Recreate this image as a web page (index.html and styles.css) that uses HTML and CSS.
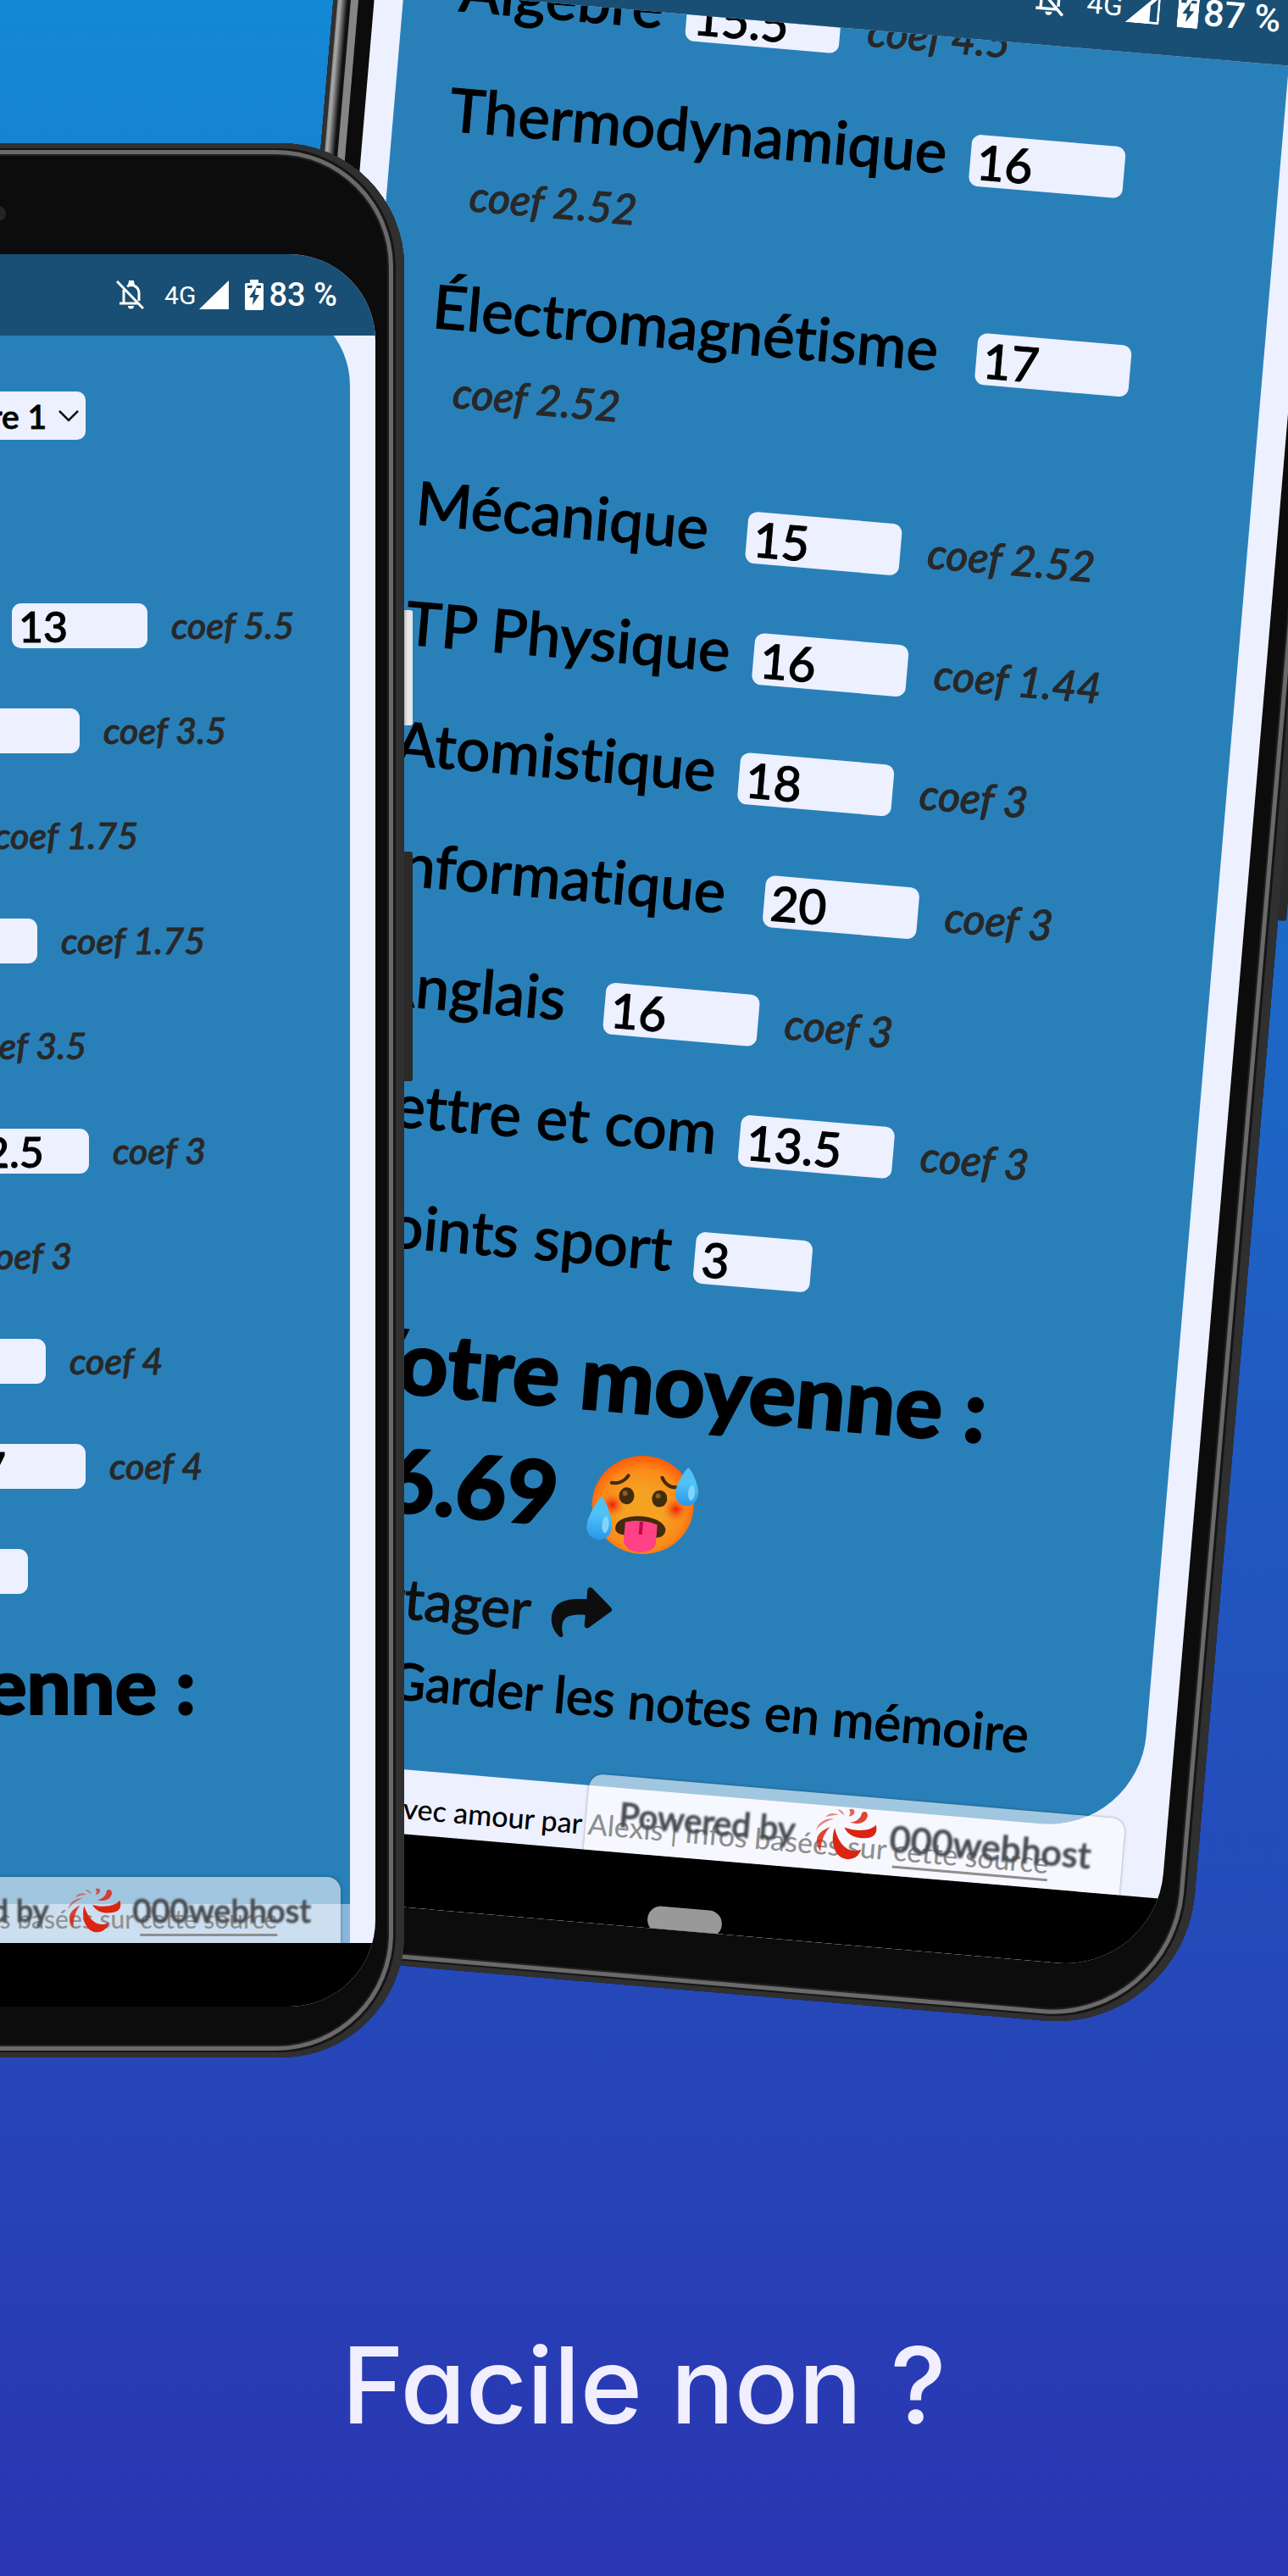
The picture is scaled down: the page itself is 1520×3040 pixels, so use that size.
FILE: index.html
```html
<!DOCTYPE html>
<html lang="fr">
<head>
<meta charset="utf-8">
<meta name="viewport" content="width=device-width, initial-scale=1">
<title>Facile non ?</title>
<link rel="stylesheet" href="styles.css">
</head>
<body>
<svg class="defs" aria-hidden="true">
  <symbol id="bell-off" viewBox="0 0 33 34">
    <path fill="none" stroke="currentColor" stroke-width="3" d="M9 11v15M13 7c7-4 14 1 14 8v9M4 27h22M1 1l31 32"/>
    <path fill="currentColor" d="M15 1a3 3 0 0 1 6 0l1 4h-8zM14 30h7a3.500 3.500 0 0 1-7 0z"/>
  </symbol>
  <symbol id="signal" viewBox="0 0 35 34"><path fill="currentColor" d="M35 0v34H0z"/></symbol>
  <symbol id="signal-low" viewBox="0 0 35 34"><path fill="currentColor" fill-rule="evenodd" d="M35 0v34H0zM32.500 7.500L25 15v16.500h7.500z"/></symbol>
  <symbol id="battery" viewBox="0 0 22 36">
    <path fill="currentColor" fill-rule="evenodd" d="M6 0h10v4h4q2 0 2 2v28q0 2-2 2H2q-2 0-2-2V6q0-2 2-2h4zM3 7v3h5l1-3zM14 7l-1 3h6V7zM13 9L5 21h5l-1 9 8-12h-5z"/>
  </symbol>
  <symbol id="swirl" viewBox="0 0 190 160">
    <g fill="#dc2410">
      <path d="M58 64C46 110 66 160 108 158c20-2 34-16 38-34-30 16-68 2-88-60z"/>
      <path d="M88 60c17 34 62 32 84 24 15-6 20-22 13-40-13 20-55 28-97 16z"/>
      <path opacity=".85" d="M20 142C-6 108 4 82 44 62 26 84 20 110 20 142z"/>
      <path opacity=".85" d="M104 43c22-4 32-16 34-31 8-12 20-4 19 8-4 20-28 30-53 23z"/>
      <path opacity=".7" d="M98 4c8-6 19-2 17 8-2 8-9 12-17 13 6-8 6-14 0-21z"/>
      <path opacity=".55" d="M1 76c5-26 26-40 52-40C32 46 16 54 1 76zM27 33c8-14 25-17 40-9-16 0-26 4-40 9zM62 6c11 0 19 6 22 17-9-7-15-10-22-17z"/>
    </g>
  </symbol>
</svg>

<main class="poster">
  <section class="stage">

    <article class="phone phone-tilted">
      <span class="side-key key-power"></span><span class="side-key key-volume"></span>
      <div class="screen">
        <header class="status">
          <svg class="i-bell"><use href="#bell-off"/></svg>
          <span class="net">4G</span>
          <svg class="i-signal"><use href="#signal-low"/></svg>
          <svg class="i-battery"><use href="#battery"/></svg>
          <span class="level">87 %</span>
        </header>
        <div class="view view-end">
          <form class="card">
            <div class="grades">
              <div class="grade"><label for="r1">Algèbre</label><input id="r1" value="15.5"><em>coef 4.5</em></div>
              <div class="grade"><label for="r2">Thermodynamique</label><input id="r2" value="16"><em>coef 2.52</em></div>
              <div class="grade"><label for="r3">Électromagnétisme&nbsp;</label><input id="r3" value="17"><em>coef 2.52</em></div>
              <div class="grade"><label for="r4">Mécanique&nbsp;</label><input id="r4" value="15"><em>coef 2.52</em></div>
              <div class="grade"><label for="r5">TP Physique</label><input id="r5" value="16"><em>coef 1.44</em></div>
              <div class="grade"><label for="r6">Atomistique</label><input id="r6" value="18"><em>coef 3</em></div>
              <div class="grade"><label for="r7">Informatique&nbsp;</label><input id="r7" value="20"><em>coef 3</em></div>
              <div class="grade"><label for="r8">Anglais&nbsp;</label><input id="r8" value="16"><em>coef 3</em></div>
              <div class="grade"><label for="r9">Lettre et com</label><input id="r9" value="13.5"><em>coef 3</em></div>
              <div class="grade"><label for="r10">Points sport</label><input id="r10" class="short" value="3"></div>
            </div>
            <h2>Votre moyenne : 16.69
              <svg class="emoji" viewBox="0 0 130 118" role="img" aria-label="visage en surchauffe">
                <defs>
                  <radialGradient id="face" cx=".5" cy=".55" r=".55"><stop offset=".4" stop-color="#f5a122"/><stop offset=".75" stop-color="#fb8a1a"/><stop offset="1" stop-color="#ff5a06"/></radialGradient>
                  <radialGradient id="blush"><stop offset="0" stop-color="#ef1b08"/><stop offset="1" stop-color="#f5831a" stop-opacity="0"/></radialGradient>
                  <linearGradient id="drop" x2="0" y2="1"><stop offset=".4" stop-color="#4fc3f7"/><stop offset="1" stop-color="#2a96ea"/></linearGradient>
                </defs>
                <ellipse cx="64" cy="59" rx="60" ry="58" fill="url(#face)"/>
                <circle cx="28" cy="62" r="16" fill="url(#blush)"/><circle cx="103" cy="61" r="16" fill="url(#blush)"/>
                <g fill="none" stroke="#422b0d" stroke-width="4" stroke-linecap="round"><path d="M25 36c8 1 15-3 19-10M84 25c4 7 10 11 18 10"/></g>
                <ellipse cx="44" cy="50" rx="9" ry="10" fill="#422b0d"/><ellipse cx="83" cy="50" rx="9" ry="10" fill="#422b0d"/>
                <circle cx="42" cy="47" r="3" fill="#896024"/><circle cx="81" cy="47" r="3" fill="#896024"/>
                <path fill="#422b0d" d="M34 87c2-18 54-20 59-2 1 10-8 12-14 11H44c-6 0-11-3-10-9z"/>
                <path fill="#ff4185" d="M45 81c12-4 26-4 38 0v22c-2 16-36 16-38 0z"/><path stroke="#c1074a" stroke-width="4" d="M64 79v15"/>
                <path fill="url(#drop)" d="M15 54c3 0 14 22 15 33 0 24-31 22-30 0 1-11 12-33 15-33z"/>
                <path fill="url(#drop)" d="M114 11c3 0 14 19 14 29 0 22-28 20-27 0 1-10 10-29 13-29z"/>
                <ellipse cx="22" cy="86" rx="4" ry="10" fill="#81d4fa"/><ellipse cx="120" cy="40" rx="4" ry="9" fill="#81d4fa"/>
              </svg>
            </h2>
            <button type="button" class="share">Partager
              <svg class="i-share" viewBox="0 30 512 452" aria-hidden="true"><path fill="currentColor" d="M503.691 189.836L327.687 37.851C312.281 24.546 288 35.347 288 56.015v80.053C127.371 137.907 0 170.100 0 322.326c0 61.441 39.581 122.309 83.333 154.132 13.653 9.931 33.111-2.533 28.077-18.631C66.066 312.814 132.917 274.316 288 272.085V360c0 20.700 24.300 31.453 39.687 18.164l176.004-152c11.071-9.562 11.086-26.753 0-36.328z"/></svg>
            </button>
            <div class="keep"><input type="checkbox" id="keep" checked><label for="keep">Garder les notes en mémoire</label></div>
          </form>
          <footer class="credits">Fait avec amour par <span>Alexis | Infos basées sur</span> <a href="#source">cette source</a></footer>
          <aside class="badge"><span class="badge-by">Powered by</span><svg class="i-swirl"><use href="#swirl"/></svg><span class="badge-host">000webhost</span></aside>
        </div>
        <div class="nav"><span class="pill"></span></div>
      </div>
    </article>

    <article class="phone phone-front">
      <span class="side-key key-power"></span><span class="side-key key-volume"></span>
      <span class="sensor"></span>
      <div class="screen">
        <header class="status">
          <svg class="i-bell"><use href="#bell-off"/></svg>
          <span class="net">4G</span>
          <svg class="i-signal"><use href="#signal"/></svg>
          <svg class="i-battery"><use href="#battery"/></svg>
          <span class="level">83 %</span>
        </header>
        <div class="view">
          <form class="card">
            <div class="period">
              <select aria-label="Semestre"><option>Semestre 1</option></select>
              <svg class="i-chevron" viewBox="0 0 24 14" aria-hidden="true"><path fill="none" stroke="#111" stroke-width="2.500" d="M1 1l11 11L23 1"/></svg>
            </div>
            <div class="grades">
              <div class="grade"><label for="f1" style="width:457px">Analyse</label><input id="f1" value="13"><em>coef 5.5</em></div>
              <div class="grade"><label for="f2" style="width:377px">Algèbre</label><input id="f2" value="12"><em>coef 3.5</em></div>
              <div class="grade"><label for="f3" style="width:248px">Optique</label><input id="f3" value="14"><em>coef 1.75</em></div>
              <div class="grade"><label for="f4" style="width:327px">Mécanique</label><input id="f4" value="15"><em>coef 1.75</em></div>
              <div class="grade"><label for="f5" style="width:212px">Chimie</label><input id="f5" value="12"><em>coef 3.5</em></div>
              <div class="grade"><label for="f6" style="width:388px">Informatique</label><input id="f6" value="12.5"><em>coef 3</em></div>
              <div class="grade"><label for="f7" style="width:230px">Anglais</label><input id="f7" value="16"><em>coef 3</em></div>
              <div class="grade"><label for="f8" style="width:337px">Projet</label><input id="f8" value="15"><em>coef 4</em></div>
              <div class="grade"><label for="f9" style="width:384px">Lettre et com</label><input id="f9" value="17"><em>coef 4</em></div>
              <div class="grade"><label for="f10" style="width:356px">Points sport</label><input id="f10" class="short" value="2"></div>
            </div>
            <h2>Votre moyenne :</h2>
          </form>
          <footer class="credits">Fait avec amour par <span>Alexis | Infos basées sur</span> <a href="#source">cette source</a></footer>
          <aside class="badge"><span class="badge-by">Powered by</span><svg class="i-swirl"><use href="#swirl"/></svg><span class="badge-host">000webhost</span></aside>
        </div>
        <div class="nav"><span class="pill"></span></div>
      </div>
    </article>
  </section>

  <h1>Facile non ?</h1>
</main>
</body>
</html>
```
FILE: styles.css
```css
* { box-sizing: border-box; }

body {
  margin: 0;
  min-height: 100vh;
  background: linear-gradient(#1488d4, #2a35b1);
  font-family: Lato, "Noto Sans", sans-serif;
  font-weight: 500;
  font-variant-ligatures: none;
  color: #000;
}

.defs { position: absolute; width: 0; height: 0; }

.poster { overflow: hidden; }

.stage { position: relative; padding-top: 169px; }

h1 {
  margin: 0;
  padding: 315px 0 152px;
  text-align: center;
  color: #f0eeff;
  font: 500 125px/144px Inter, sans-serif;
  font-feature-settings: "cv11";
}

/* ---------- phone body ---------- */
.phone {
  --edge-l: 42px; --edge-r: 34px; --edge-t: 131px; --edge-b: 60px;
  --bar: 96px; --nav: 75px; --gutter: 30px; --pad: 60px;
  --radius: 146px; --screen-radius: 102px;
  --row: 53px; --row-gap: 71px; --wrap-gap: 26px;
  --field: 160px; --field-short: 120px; --field-gap: 24px; --coef-gap: 28px;
  --label: 61px; --label-lh: 38px;
  --digits: 50px; --coef: 43px; --coef-lh: 52px;
  --title: 92px; --title-lh: 122px;
  --small: 30px; --badge-by: 36px; --badge-host: 38px; --credits: 46px;
  position: relative;
  z-index: 2;
  width: 1052px;
  aspect-ratio: 1052 / 2259;
  margin-left: -575px;
  padding: var(--edge-t) var(--edge-r) var(--edge-b) var(--edge-l);
  border-radius: var(--radius);
  background: #0c0c0c;
  box-shadow: inset 0 0 0 6px #303030, inset -5px 0 0 5px #303030,
    inset -5px 0 0 8px #151517, inset -5px 0 0 13px #6a6a6a, inset -5px 0 0 15px #202020;
}

.phone-tilted {
  --edge-l: 48px; --edge-r: 39px; --edge-t: 150px; --edge-b: 69px;
  --bar: 109px; --nav: 86px; --gutter: 34px; --pad: 66px;
  --radius: 164px; --screen-radius: 116px;
  --row: 61px; --row-gap: 81px; --wrap-gap: 31px;
  --field: 182px; --field-short: 138px; --field-gap: 28px; --coef-gap: 32px;
  --label: 71px; --label-lh: 44px;
  --digits: 57px; --coef: 50px; --coef-lh: 60px;
  --title: 104px; --title-lh: 140px;
  --small: 34px; --badge-by: 40px; --badge-host: 43px; --credits: 76px;
  position: absolute;
  z-index: 1;
  left: 392px;
  top: -311px;
  width: 1203px;
  aspect-ratio: 1203 / 2582;
  margin: 0;
  transform-origin: -392px 311px;
  transform: rotate(4.88deg);
}

.phone-tilted::before {
  content: "";
  position: absolute;
  left: 5px;
  top: 164px;
  bottom: 164px;
  width: 25px;
  background: linear-gradient(90deg, #888 0, #aaa 3px, #111 12px, #111 15px, #858585 16px, #858585 24px, #0c0c0c 25px);
}

.side-key { position: absolute; left: 100%; width: 10px; border-radius: 0 3px 3px 0; background: #2a2a2a; }
.key-power { top: 24.4%; height: 6%; background: linear-gradient(90deg, #bbb, #e8e8e8 4px); }
.key-volume { top: 37%; height: 12%; }

.sensor { position: absolute; left: 564px; top: 74px; width: 18px; height: 18px; border-radius: 50%; background: #242424; }

.screen {
  display: flex;
  flex-direction: column;
  height: 100%;
  overflow: hidden;
  border-radius: var(--screen-radius);
  background: #edf0ff;
}

/* ---------- status bar ---------- */
.status {
  position: relative;
  z-index: 1;
  flex: none;
  display: flex;
  align-items: center;
  justify-content: flex-end;
  height: var(--bar);
  padding-right: 45px;
  background: #194f74;
  color: #fff;
  font-family: Roboto, sans-serif;
}
.i-bell { width: 33px; height: 34px; margin-right: 24px; }
.net { margin-right: 4px; font-size: 30px; font-weight: 400; }
.i-signal { width: 35px; height: 34px; margin-right: 19px; }
.i-battery { width: 22px; height: 36px; margin-right: 6px; }
.level { font-size: 38px; font-weight: 500; }

.phone-tilted .status { padding-right: 48px; }
.phone-tilted .i-bell { width: 38px; height: 39px; margin-right: 26px; }
.phone-tilted .net { font-size: 34px; }
.phone-tilted .i-signal { width: 40px; height: 39px; margin-right: 21px; }
.phone-tilted .i-battery { width: 25px; height: 41px; }
.phone-tilted .level { font-size: 43px; }

/* ---------- grade form ---------- */
.view {
  position: relative;
  flex: 1;
  min-height: 0;
  display: flex;
  flex-direction: column;
  overflow: hidden;
}
.view-end { justify-content: flex-end; }

.card {
  flex: 1 0 auto;
  margin: -41px var(--gutter) 0;
  padding: 107px var(--pad) 0;
  border-radius: 100px 100px 0 0;
  background: #2980b9;
  -webkit-text-stroke: 1px currentColor;
}
.view-end .card {
  flex: none;
  margin-top: 0;
  padding: 80px var(--pad) 67px;
  border-radius: 115px;
  border-bottom-left-radius: 0;
}

.period { position: relative; display: flex; width: 544px; margin-bottom: 193px; }
.period select {
  appearance: none;
  width: 100%;
  height: 57px;
  padding: 0 46px 0 20px;
  border: 0;
  border-radius: 10px;
  background: #edf0ff;
  color: #000;
  font: 500 39px Lato, sans-serif;
  text-align: right;
  text-align-last: right;
}
.i-chevron { position: absolute; right: 8px; top: 22px; width: 24px; height: 14px; }

.grades { display: flex; flex-direction: column; gap: var(--row-gap); }

.grade { display: flex; flex-wrap: wrap; align-items: flex-start; row-gap: var(--wrap-gap); }
.grade label { flex: none; font-size: var(--label); line-height: var(--label-lh); white-space: nowrap; }
.phone-tilted .grade label { margin-right: var(--field-gap); }
.grade input {
  flex: none;
  width: var(--field);
  height: var(--row);
  padding: 0 8px;
  border: 0;
  border-radius: 11px;
  background: #edf0ff;
  color: #000;
  font: 500 var(--digits) Lato, sans-serif;
}
.grade .short { width: var(--field-short); }
.grade em { margin-left: var(--coef-gap); color: #282828; font-size: var(--coef); line-height: var(--coef-lh); }

h2 {
  margin: 46px 0 0;
  font-size: var(--title);
  line-height: var(--title-lh);
  font-weight: 900;
  -webkit-text-stroke: 2px currentColor;
}
.phone-tilted h2 { margin-top: 49px; }

.emoji { width: 130px; height: 118px; margin: -12px 0 -12px 12px; vertical-align: -14px; }

.share {
  display: flex;
  align-items: center;
  gap: 24px;
  margin-top: 30px;
  padding: 0;
  border: 0;
  background: none;
  color: #0e0e0e;
  font: 500 66px/80px Lato, sans-serif;
}
.i-share { width: 72px; height: 62px; }

.keep { display: flex; align-items: center; gap: 24px; margin-top: 19px; font-size: 60px; line-height: 76px; }
.keep input { width: 62px; height: 50px; margin: 0; }

/* ---------- footer, host badge, navigation ---------- */
.credits {
  flex: none;
  height: var(--credits);
  margin: 0 var(--gutter);
  text-align: center;
  white-space: nowrap;
  font-size: var(--small);
  line-height: 34px;
}
.phone-front .credits { background: #88b7dc; }
.phone-tilted .credits { padding-top: 28px; }
.credits a { color: inherit; text-underline-offset: 6px; }

.badge {
  position: absolute;
  right: 41px;
  bottom: 0;
  display: flex;
  align-items: center;
  justify-content: flex-end;
  width: 555px;
  height: 78px;
  padding-right: 35px;
  border-radius: 16px 16px 0 0;
  background: rgba(255, 255, 255, .56);
  box-shadow: 0 0 4px rgba(0, 0, 0, .35);
  color: #484c50;
  white-space: nowrap;
}
.badge span { flex: none; filter: blur(1px); -webkit-text-stroke: 1px currentColor; }
.badge-by { font-size: var(--badge-by); }
.badge-host { font-size: var(--badge-host); }
.i-swirl { flex: none; width: 63px; height: 53px; margin: 0 14px 0 22px; }
.phone-tilted .badge { right: 50px; width: 634px; height: 90px; padding-right: 37px; }
.phone-tilted .i-swirl { width: 72px; height: 61px; margin: 0 16px 0 24px; }

.nav { flex: none; display: flex; justify-content: center; align-items: flex-end; height: var(--nav); overflow: hidden; background: #000; }
.pill { width: 88px; height: 32px; margin-bottom: -5px; border-radius: 16px; background: #999; }
```
